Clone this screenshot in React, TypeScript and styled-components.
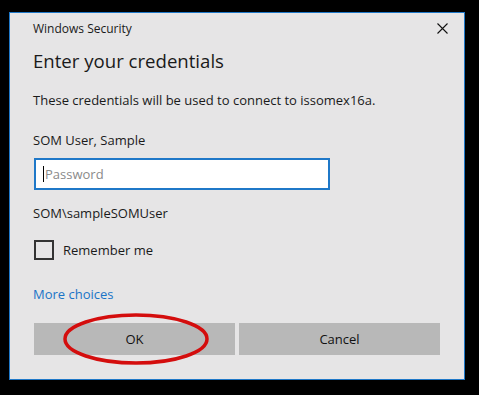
import React from "react";
import styled, { createGlobalStyle } from "styled-components";

const Global = createGlobalStyle`
  html, body { margin: 0; padding: 0; background: #000; }
  body { width: 479px; height: 395px; overflow: hidden; font-family: "Open Sans", "Noto Sans", sans-serif; }
`;

const Page = styled.div`
  padding: 12px 0 0 9px;
`;

const Dialog = styled.div`
  box-sizing: border-box;
  width: 456px;
  height: 368px;
  background: #e6e5e6;
  border: 1px solid #1f78c8;
  padding: 0 24px 0 23px;
  display: flex;
  flex-direction: column;
  color: #1a1a1a;
`;

const TitleBar = styled.div`
  display: flex;
  align-items: center;
  justify-content: space-between;
  height: 30px;
  font-size: 12px;
`;

const Close = styled.button`
  border: none;
  background: transparent;
  padding: 0;
  margin-right: -17px;
  width: 30px;
  height: 24px;
  display: flex;
  align-items: center;
  justify-content: center;
  color: #111;
`;

const Heading = styled.div`
  font-size: 18.6px;
  line-height: 28px;
  margin-top: 4px;
  font-weight: 400;
`;

const Text = styled.div<{ $mt: number }>`
  font-size: 13px;
  line-height: 18px;
  margin-top: ${(p) => p.$mt}px;
`;

const PasswordBox = styled.div`
  box-sizing: border-box;
  margin-top: 9px;
  margin-left: 1px;
  width: 296px;
  height: 32px;
  background: #fff;
  border: 2px solid #1f78c8;
  display: flex;
  align-items: center;
  padding-left: 7px;
  font-size: 13px;
  color: #8a8a8a;
`;

const Caret = styled.span`
  display: inline-block;
  width: 1px;
  height: 16px;
  background: #000;
  margin-right: 1px;
`;

const CheckRow = styled.label`
  display: flex;
  align-items: center;
  gap: 9px;
  margin-top: 18px;
  margin-left: 1px;
  font-size: 13px;
`;

const Box = styled.span`
  box-sizing: border-box;
  width: 20px;
  height: 20px;
  border: 2px solid #333;
`;

const Link = styled.a`
  margin-top: 25px;
  font-size: 13px;
  line-height: 18px;
  color: #1a74c6;
  text-decoration: none;
`;

const Buttons = styled.div`
  position: relative;
  display: grid;
  grid-template-columns: 1fr 1fr;
  gap: 4px;
  margin-top: 20px;
  margin-left: 1px;
  width: 406px;
`;

const Button = styled.button`
  height: 32px;
  border: none;
  background: #b8b8b8;
  font-family: inherit;
  font-size: 13px;
  color: #111;
`;

const Ring = styled.svg`
  position: absolute;
  left: 28px;
  top: -11px;
  pointer-events: none;
`;

export default function App() {
  return (
    <>
      <Global />
      <Page>
        <Dialog>
          <TitleBar>
            <span>Windows Security</span>
            <Close aria-label="Close">
              <svg width="11" height="11" viewBox="0 0 11 11">
                <path d="M0.5 0.5 L10.5 10.5 M10.5 0.5 L0.5 10.5" stroke="#111" strokeWidth="1.1" />
              </svg>
            </Close>
          </TitleBar>
          <Heading>Enter your credentials</Heading>
          <Text $mt={16}>These credentials will be used to connect to issomex16a.</Text>
          <Text $mt={22}>SOM User, Sample</Text>
          <PasswordBox>
            <Caret />
            Password
          </PasswordBox>
          <Text $mt={14}>SOM\sampleSOMUser</Text>
          <CheckRow>
            <Box />
            Remember me
          </CheckRow>
          <Link href="#">More choices</Link>
          <Buttons>
            <Button>OK</Button>
            <Button>Cancel</Button>
            <Ring width="148" height="54" viewBox="0 0 148 54">
              <ellipse cx="74" cy="27" rx="71" ry="24" fill="none" stroke="#d40d0d" strokeWidth="3.5" />
            </Ring>
          </Buttons>
        </Dialog>
      </Page>
    </>
  );
}
